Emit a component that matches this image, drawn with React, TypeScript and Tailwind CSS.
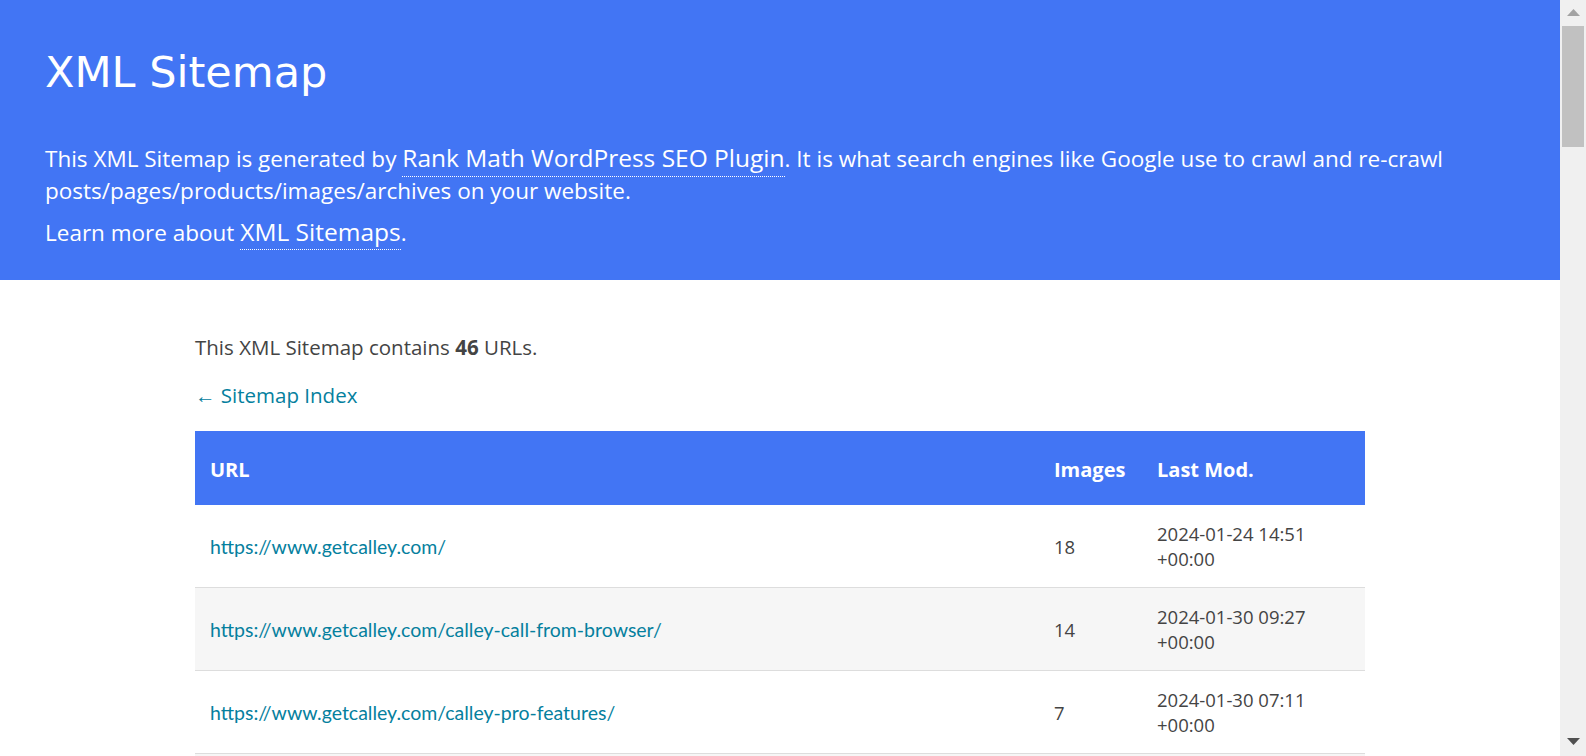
const rows = [
  { url: "https://www.getcalley.com/", images: "18", date: "2024-01-24 14:51", tz: "+00:00" },
  { url: "https://www.getcalley.com/calley-call-from-browser/", images: "14", date: "2024-01-30 09:27", tz: "+00:00" },
  { url: "https://www.getcalley.com/calley-pro-features/", images: "7", date: "2024-01-30 07:11", tz: "+00:00" },
  { url: "https://www.getcalley.com/calley-teams-features/", images: "9", date: "2024-01-29 11:05", tz: "+00:00" },
];

function Scrollbar() {
  return (
    <div className="w-[26px] h-full bg-[#f0f0f0] flex flex-col flex-shrink-0">
      <div className="h-[26px] flex items-center justify-center pb-[1px]">
        <svg width="13" height="7" viewBox="0 0 13 7">
          <path d="M6.5 0 L13 7 L0 7 Z" fill="#a3a3a3" />
        </svg>
      </div>
      <div className="mx-[2px] h-[121px] bg-[#c1c1c1]" />
      <div className="flex-1" />
      <div className="h-[26px] flex items-start justify-center pt-[8px]">
        <svg width="13" height="7" viewBox="0 0 13 7">
          <path d="M0 0 L13 0 L6.5 7 Z" fill="#505050" />
        </svg>
      </div>
    </div>
  );
}

export default function App() {
  return (
    <div className="flex h-[756px] w-full overflow-hidden bg-white font-['Segoe_UI','Open_Sans',sans-serif]">
      <div className="flex-1 h-full overflow-hidden">
        {/* Header */}
        <div className="bg-[#4275f4] text-white pl-[45px] pr-[45px] pt-[48px] pb-[31px]">
          <h1 className="font-['DejaVu_Sans',Verdana,sans-serif] text-[43px] leading-[49px] font-normal">
            XML Sitemap
          </h1>
          <p className="mt-[46px] text-[22.5px] leading-[32px]">
            This XML Sitemap is generated by{" "}
            <a className="text-[24.5px] leading-[30px] border-b border-dotted border-white pb-[2px]">
              Rank Math WordPress SEO Plugin
            </a>
            . It is what search engines like Google use to crawl and re-crawl posts/pages/products/images/archives
            on your website.
          </p>
          <p className="mt-[10px] text-[22.5px] leading-[32px]">
            Learn more about{" "}
            <a className="text-[24.5px] leading-[30px] border-b border-dotted border-white pb-[1px]">XML Sitemaps</a>.
          </p>
        </div>

        {/* Content */}
        <div className="w-3/4 mx-auto pt-[55px] text-[#444] text-[20.5px] leading-[25px]">
          <p>
            This XML Sitemap contains <strong className="font-bold">46</strong> URLs.
          </p>
          <p className="mt-[23px]">
            <a className="text-[#05809e]">← Sitemap Index</a>
          </p>

          <div className="mt-[23px]">
            <div className="grid grid-cols-[844px_103px_223px] bg-[#4275f4] text-white font-bold text-[20px] h-[74px] pt-[26px]">
              <div className="pl-[15px]">URL</div>
              <div className="pl-[15px]">Images</div>
              <div className="pl-[15px]">Last Mod.</div>
            </div>
            {rows.map((row, i) => (
              <div
                key={row.url}
                className={
                  "grid grid-cols-[844px_103px_223px] h-[83px] border-b border-[#dddddd] items-center text-[18.5px] " +
                  (i % 2 === 1 ? "bg-[#f6f6f6]" : "bg-white")
                }
              >
                <div className="pl-[15px]">
                  <a className="text-[#05809e] font-[Lato,sans-serif] text-[19.5px]">{row.url}</a>
                </div>
                <div className="pl-[15px]">{row.images}</div>
                <div className="pl-[15px]">
                  <div>{row.date}</div>
                  <div>{row.tz}</div>
                </div>
              </div>
            ))}
          </div>
        </div>
      </div>
      <Scrollbar />
    </div>
  );
}
